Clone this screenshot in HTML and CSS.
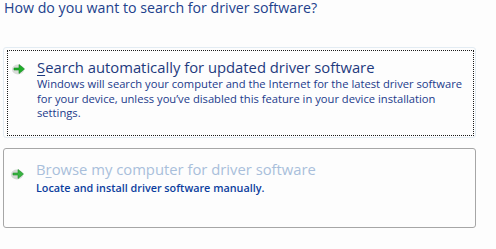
FILE: index.html
```html
<!DOCTYPE html>
<html>
<head>
<meta charset="utf-8">
<link rel="stylesheet" href="styles.css">
</head>
<body>
<div class="page">
  <h1 class="heading">How do you want to search for driver software?</h1>
  <div class="option option-focus">
    <div class="focus-ring">
      <svg class="arrow" width="14" height="12" viewBox="0 0 14 12">
        <ellipse cx="6" cy="6.5" rx="6" ry="5" fill="#d9dcd9"/>
        <path d="M2 5h5V1.5L12.5 6 7 10.5V7H2z" fill="#1fae2a" stroke="#138a1c" stroke-width="0.6"/>
      </svg>
      <div class="text">
        <div class="title"><u>S</u>earch automatically for updated driver software</div>
        <div class="desc">Windows will search your computer and the Internet for the latest driver software for your device, unless you’ve disabled this feature in your device installation settings.</div>
      </div>
    </div>
  </div>
  <div class="option option-plain">
    <svg class="arrow" width="14" height="12" viewBox="0 0 14 12">
      <ellipse cx="6" cy="6.5" rx="6" ry="5" fill="#d3d8d4"/>
      <path d="M2 5h5V1.5L12.5 6 7 10.5V7H2z" fill="#38b341" stroke="#1e9628" stroke-width="0.6"/>
    </svg>
    <div class="text">
      <div class="title light">B<u>r</u>owse my computer for driver software</div>
      <div class="desc strong">Locate and install driver software manually.</div>
    </div>
  </div>
</div>
</body>
</html>
```
FILE: styles.css
```css
html, body {
  margin: 0;
  padding: 0;
  background: #fdfdfd;
}
.page {
  width: 496px;
  height: 249px;
  padding: 0 0 0 3px;
  box-sizing: border-box;
  font-family: "Open Sans", "Noto Sans", sans-serif;
  overflow: hidden;
}
.heading {
  margin: 0 0 0 1px;
  font-size: 14.2px;
  font-weight: normal;
  color: #22418c;
  line-height: 16px;
}
.option {
  width: 473px;
  box-sizing: border-box;
}
.option-focus {
  margin-top: 31px;
  height: 91px;
  border: 1px solid #e3ecf3;
  border-radius: 3px;
  padding: 2px 1px 1px 3px;
}
.focus-ring {
  height: 86px;
  border: 1px dotted #1a1a1a;
  box-sizing: border-box;
  display: flex;
  align-items: flex-start;
  padding: 7px 0 0 4px;
}
.option-focus .arrow {
  margin-top: 5px;
}
.option-plain {
  margin-top: 10px;
  height: 80px;
  border: 1px solid #a6a6a6;
  border-radius: 3px;
  display: flex;
  align-items: flex-start;
  padding: 11px 0 0 7px;
}
.arrow {
  flex: none;
  margin-top: 8px;
  margin-right: 11px;
}
.text {
  flex: 1;
  padding-right: 6px;
}
.title {
  font-size: 14.8px;
  line-height: 18px;
  color: #1e3a7e;
}
.title u {
  text-decoration-thickness: 1px;
  text-underline-offset: 2px;
}
.title.light {
  color: #a9bfdb;
}
.desc {
  margin-top: 1px;
  font-size: 11.2px;
  line-height: 14.5px;
  color: #1b3a8b;
}
.desc.strong {
  color: #0c3d9e;
  font-weight: 600;
  font-size: 10.8px;
  line-height: 14px;
  margin-top: 3px;
}
```
